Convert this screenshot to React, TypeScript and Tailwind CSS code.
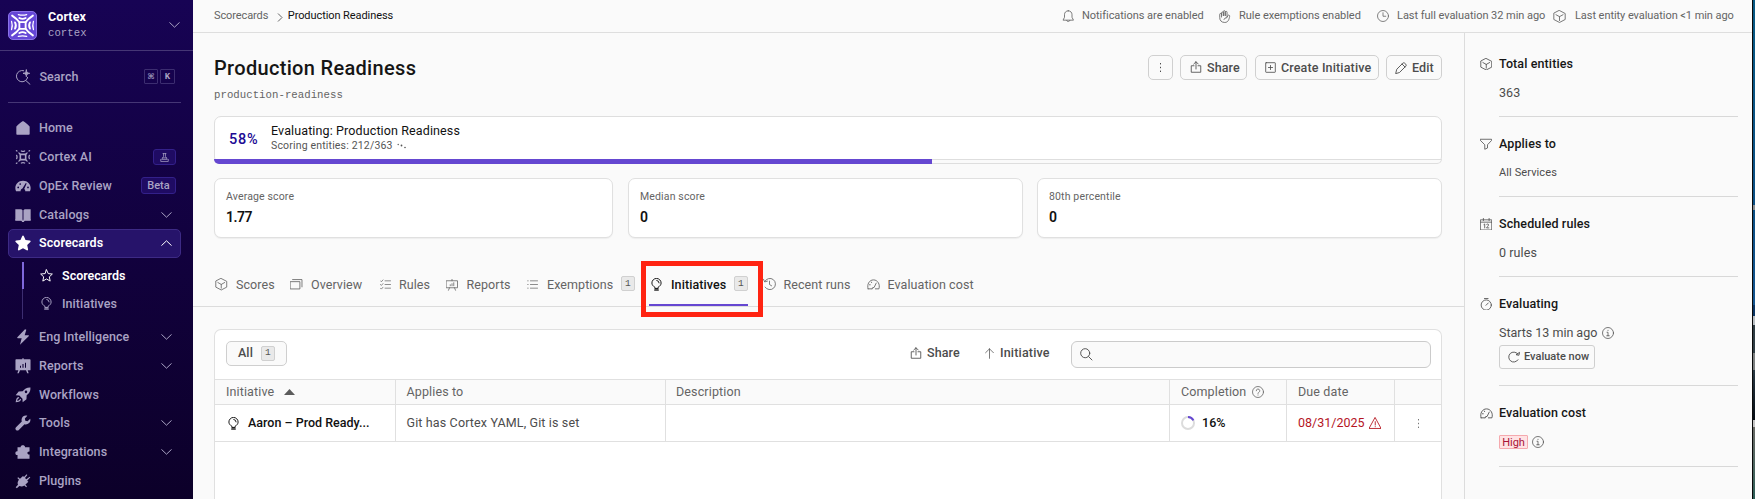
import React from "react";
import type { ReactNode } from "react";

type IconProps = { className?: string };

function Line({ className = "size-[13px]", children, w = 1.6 }: IconProps & { children: ReactNode; w?: number }) {
  return (
    <svg viewBox="0 0 24 24" fill="none" stroke="currentColor" strokeWidth={w} strokeLinecap="round" strokeLinejoin="round" className={`block shrink-0 ${className}`}>
      {children}
    </svg>
  );
}

function Solid({ className = "size-[16px]", children }: IconProps & { children: ReactNode }) {
  return (
    <svg viewBox="0 0 24 24" fill="currentColor" className={`block shrink-0 ${className}`}>
      {children}
    </svg>
  );
}

const Chevron = ({ className = "h-[6px] w-[11px]" }: IconProps) => (
  <svg viewBox="0 0 11 6" fill="none" stroke="currentColor" strokeWidth="1" strokeLinecap="round" strokeLinejoin="round" className={`block shrink-0 ${className}`}>
    <path d="M0.7 0.6L5.5 5.2L10.3 0.6" />
  </svg>
);

const Cube = (p: IconProps) => (
  <Line {...p}>
    <path d="M12 1L22.5 6.5V17.5L12 23L1.5 17.5V6.5Z" />
    <path d="M5.5 8.7L12 12.3L18.5 8.7M12 12.3V19.5" />
  </Line>
);
const Bulb = (p: IconProps) => (
  <Line {...p} w={1.8}>
    <path d="M9 18.5V17C5.5 15 3.5 12.500 3.500 9.300A8.500 8.500 0 0 1 20.500 9.300C20.500 12.500 18.500 15 15 17V18.500Z" />
    <path d="M12.500 4.500A4.800 4.800 0 0 1 16.800 9M8.500 22.500H15.500M9 20.500H15" />
  </Line>
);
const Bell = (p: IconProps) => (
  <Line {...p}>
    <path d="M12 1.500C7.500 1.500 4.800 4.800 4.800 9V14L2 19.500H22L19.200 14V9C19.200 4.800 16.500 1.500 12 1.500Z" />
    <path d="M9 20C9.500 23.300 14.500 23.300 15 20" />
  </Line>
);
const Hand = (p: IconProps) => (
  <Line {...p} w={1.6}>
    <path d="M6.500 13V5.500a1.700 1.700 0 0 1 3.400 0V11V3a1.700 1.700 0 0 1 3.400 0V11V4.200a1.700 1.700 0 0 1 3.400 0V13.500l1.500-3.200a1.800 1.800 0 0 1 3.300 1.300C20.500 18 18.500 23 12.500 23C6 23 3.200 19 3.200 14V8a1.650 1.650 0 0 1 3.300 0" />
    <path d="M11 17.500a5 5 0 0 1 5-3.500" />
  </Line>
);
const Clock = (p: IconProps) => (
  <Line {...p}>
    <circle cx="12" cy="12" r="11" />
    <path d="M12 5.500V12.500H17.500" />
  </Line>
);
const Share = (p: IconProps) => (
  <Line {...p} w={1.7}>
    <path d="M8 9.500H2.500V22.500H21.500V9.500H16M12 16V1.500M7.500 6L12 1.500L16.500 6" />
  </Line>
);
const PlusBox = (p: IconProps) => (
  <Line {...p} w={1.8}>
    <rect x="1.500" y="1.500" width="21" height="21" rx="1" />
    <path d="M12 7.500V16.500M7.500 12H16.500" />
  </Line>
);
const Pencil = (p: IconProps) => (
  <Line {...p} w={1.8}>
    <path d="M1.500 22.500L3.500 14.500L15.500 2.500a3 3 0 0 1 4.200 0L21.500 4.300a3 3 0 0 1 0 4.200L9.500 20.500ZM14 4L20 10" />
  </Line>
);
const Windows = (p: IconProps) => (
  <Line {...p}>
    <path d="M1 7H19V21H1Z" />
    <path d="M5 3H23V17" />
  </Line>
);
const Checklist = (p: IconProps) => (
  <Line {...p}>
    <path d="M11 4H23M11 12H23M11 20H23M1 4L3 6L6.500 2M1 12L3 14L6.500 10M1 20L3 22L6.500 18" />
  </Line>
);
const Bullets = (p: IconProps) => (
  <Line {...p}>
    <path d="M7.500 4H23M7.500 12H23M7.500 20H23M1.500 4H2.500M1.500 12H2.500M1.500 20H2.500" />
  </Line>
);
const Board = (p: IconProps) => (
  <Line {...p}>
    <path d="M12 0.800V3.500M1 3.500H23V17.500H1ZM7 17.500L5 22.500M17 17.500L19 22.500M8.500 13.500V11.500M12 13.500V9.500M15.500 13.500V7.500" />
  </Line>
);
const Gauge = (p: IconProps) => (
  <Line {...p} w={1.6}>
    <path d="M2 20C-0.500 12 4 3.500 12 3.500S24.500 12 22 20H15.500M2 20H8.500" />
    <path d="M9.500 20a2.600 2.600 0 0 1 3.500-2.400L17 9.500M4.500 12.500H6M8 7.500L8.500 8.500" />
  </Line>
);
const History = (p: IconProps) => (
  <Line {...p}>
    <path d="M3.500 6.500A10.800 10.800 0 1 1 4 17.500M1 2.500L3.200 7.500L8.500 6M12.500 6V12.500L16.500 15" />
  </Line>
);
const Magnifier = (p: IconProps) => (
  <Line {...p} w={1.8}>
    <circle cx="10" cy="10" r="8.700" />
    <path d="M16.500 16.500L23 23" />
  </Line>
);
const ArrowUp = (p: IconProps) => (
  <Line {...p}>
    <path d="M12 22.500V1.800M3.500 10.300L12 1.800L20.500 10.300" />
  </Line>
);
const Help = (p: IconProps) => (
  <Line {...p}>
    <circle cx="12" cy="12" r="11" />
    <path d="M8.500 9.500a3.500 3.500 0 1 1 5 3.200c-1 .5-1.500 1-1.500 2.300M12 17.800V18.200" />
  </Line>
);
const Info = (p: IconProps) => (
  <Line {...p} w={1.5}>
    <circle cx="12" cy="12" r="11" />
    <path d="M10 10.500H12V17.500M9.500 17.500H14.500M12 6.500V7" />
  </Line>
);
const Warning = (p: IconProps) => (
  <Line {...p} w={1.7}>
    <path d="M12 1.500L23.200 22H0.800Z" />
    <path d="M12 9V15.500M12 18.500V18.800" />
  </Line>
);
const Funnel = (p: IconProps) => (
  <Line {...p}>
    <path d="M1 2.500H23V5L15 13.500V20L9.500 22.500V13.500L1 5Z" />
  </Line>
);
const Calendar = (p: IconProps) => (
  <Line {...p} w={1.5}>
    <path d="M1.500 3.500H22.500V23H1.500ZM1.500 8H22.500M6.500 0.800V5M17.500 0.800V5M7.500 12.500L9 11.500V19M12.500 12.500C13 11 17 11 16.500 13.500C16 16 13.500 16.500 12.500 19H17" />
  </Line>
);
const Stopwatch = (p: IconProps) => (
  <Line {...p}>
    <circle cx="12" cy="13.500" r="9.800" />
    <path d="M8.500 0.900H15.500M11.500 14L16 9.500" />
  </Line>
);
const Refresh = (p: IconProps) => (
  <Line {...p} w={1.8}>
    <path d="M20 17.500A10 10 0 1 1 19.500 6M23 3.500L21.800 8.500L16.800 7.500Z" />
  </Line>
);
const Dots = ({ className = "h-[11px] w-[3px]" }: IconProps) => (
  <svg viewBox="0 0 3 11" fill="currentColor" className={`block shrink-0 ${className}`}>
    <rect x="1" y="1" width="1" height="1.400" />
    <rect x="1" y="4.800" width="1" height="1.400" />
    <rect x="1" y="8.600" width="1" height="1.400" />
  </svg>
);
const Flask = (p: IconProps) => (
  <Line {...p} w={2}>
    <path d="M8 1.500H16M9.500 1.500V9L4.500 17H19.500L14.500 9V1.500M7 13H17M2 17V22.500H22V17" />
  </Line>
);

const HomeSolid = () => (
  <Solid>
    <path d="M12 1.500C11.500 1.500 2 9 2 10V21a1.200 1.200 0 0 0 1.200 1.200H20.800a1.200 1.200 0 0 0 1.200-1.200V10C22 9 12.500 1.500 12 1.500Z" />
  </Solid>
);
const CortexGlyph = () => (
  <Line className="size-[16px]" w={1.900}>
    <rect x="8" y="8" width="8" height="8" strokeWidth="2.400" />
    <path d="M7.500 7.500L5.800 5.800M16.500 7.500L18.200 5.800M7.500 16.500L5.800 18.200M16.500 16.500L18.200 18.200M9.500 3Q12 4.300 14.500 3M9.500 21Q12 19.700 14.500 21M2.500 9.500Q3.800 12 2.500 14.500M21.500 9.500Q20.200 12 21.500 14.500M2 2.500L3 3M22 2.500L21 3M2 21.500L3 21M22 21.500L21 21" />
  </Line>
);
const GaugeSolid = () => (
  <Solid>
    <path d="M12 4C5 4 0.500 9 0.500 15C0.500 16.800 0.900 18.500 1.600 20H8.500C8 18.300 9 16.300 11.200 15.700L16.200 7.500L17.500 8.300L13.800 16.600C15.200 17.500 15.500 18.900 15.300 20H22.400C23.100 18.500 23.500 16.800 23.500 15C23.500 9 19 4 12 4ZM4.800 15.500a1.300 1.300 0 1 1 0-2.600a1.300 1.300 0 0 1 0 2.600ZM7.800 10.300a1.300 1.300 0 1 1 0-2.600a1.300 1.300 0 0 1 0 2.600ZM19.500 15.500a1.300 1.300 0 1 1 0-2.600a1.300 1.300 0 0 1 0 2.600Z" fillRule="evenodd" />
  </Solid>
);
const BookSolid = () => (
  <Solid>
    <path d="M0.500 3.500H9.500L11.300 5V20.500L9.500 19.800H0.500ZM23.500 3.500H14.500L12.700 5V20.500L14.500 19.800H23.500ZM10 20.500H14L13 22.500H11Z" />
    <path d="M0.500 18.500H10.500L12 21L13.500 18.500H23.500V20.500H14.500L13 22.500H11L9.500 20.500H0.500Z" />
  </Solid>
);
const StarSolid = () => (
  <Solid>
    <path d="M12 0.800C12.600 0.800 13 1.200 13.300 1.800L15.800 7.600L22.200 8.300C23.500 8.500 23.900 9.700 23 10.600L18.300 15L19.600 21.500C19.800 22.800 18.800 23.600 17.600 22.900L12 19.700L6.400 22.900C5.200 23.600 4.200 22.800 4.400 21.500L5.700 15L1 10.600C0.100 9.700 0.500 8.500 1.800 8.300L8.200 7.600L10.700 1.800C11 1.200 11.400 0.800 12 0.800Z" />
  </Solid>
);
const BoltSolid = () => (
  <Solid>
    <path d="M15 0.500L3.500 12.500C3 13.200 3.300 13.800 4.200 13.800H10L7.500 23.500L20.500 10.800C21.200 10 20.800 9.300 20 9.300H14.500L17 1Z" />
  </Solid>
);
const BoardSolid = () => (
  <Solid>
    <path d="M11 0.500H13V2H22.300a1 1 0 0 1 1 1V17.500a1 1 0 0 1-1 1H19L20.500 23H18.300L16.500 18.500H7.500L5.700 23H3.500L5 18.500H1.700a1 1 0 0 1-1-1V3a1 1 0 0 1 1-1H11ZM7.500 11.500V14.500H9V11.500ZM11.200 9V14.500H12.800V9ZM15 7V14.500H16.500V7Z" fillRule="evenodd" />
  </Solid>
);
const RocketSolid = () => (
  <Solid>
    <path d="M23.200 0.800C18 0.500 14.500 2.500 11.500 6.500L5.500 6.800L1 12.500L6.500 12.800L11.200 17.500L11.500 23L17.200 18.500L17.500 12.500C21.500 9.500 23.500 6 23.200 0.800ZM16.500 9.200a1.900 1.900 0 1 1 0-3.800a1.900 1.900 0 0 1 0 3.800Z" fillRule="evenodd" />
    <path d="M5.500 15C2.500 15 1.500 18.500 1 23C5.500 22.500 9 21.500 9 18.500L7.500 17.500C7 19.500 5 20.500 3.200 20.800C3.500 19 4.500 17 6.500 16.500Z" />
  </Solid>
);
const WrenchSolid = () => (
  <Solid>
    <path d="M22.800 5.500L18.800 9.200L15.500 8.500L14.800 5.200L18.500 1.200C14.500 0 10 2.500 9.800 7.200C9.800 8.200 10 9 10.200 9.700L1.500 18.300C0.300 19.500 0.300 21.200 1.500 22.500C2.800 23.700 4.500 23.700 5.700 22.500L14.300 13.800C19.500 15.300 24.500 10.500 22.800 5.500Z" />
  </Solid>
);
const PuzzleSolid = () => (
  <Solid>
    <path d="M8.500 5C7.800 1 15.700 1 15 5H21.800V11.200C17.500 10.700 17.500 16.300 21.800 15.800V22H3.800V16.500C-0.500 17.500 -0.500 10 3.800 11V5Z" />
  </Solid>
);
const PlugSolid = () => (
  <Solid>
    <path d="M2.800 23L1 21.200L4.500 17.800C3 14.500 4.500 11.500 6 10L3.500 7.500L4.800 6.200L7.500 8.500L12 4.500L13.500 6L17.500 2L18.500 3L15 7.500L17 9.500L22 5.500L23 6.500L18.200 11.500L20 13.200L15.500 17.500L18 20L16.800 21.300L14 18.800C11.500 20.500 9 20.500 6.500 19.500Z" />
  </Solid>
);

type NavItemProps = { icon: ReactNode; label: string; trailing?: ReactNode; active?: boolean };

function NavItem({ icon, label, trailing, active }: NavItemProps) {
  return (
    <div
      className={`ml-2 flex h-[28.75px] w-[173px] items-center rounded-[5px] border pl-[6px] pr-[8px] ${
        active ? "border-[#3d2a85] bg-[#26136a] font-semibold text-white" : "border-transparent font-medium text-[#aaa3c4]"
      }`}
    >
      {icon}
      <span className="ml-[8px] flex-1 tracking-[0.08px]">{label}</span>
      {trailing}
    </div>
  );
}

function Sidebar() {
  return (
    <aside className="flex h-full w-[193px] shrink-0 flex-col bg-linear-to-b from-[#170354] to-[#0c0029] text-[12.5px] text-[#aaa3c4]">
      <div className="flex h-[51px] shrink-0 items-center border-b border-[#453675] pl-2 pr-[13px]">
        <div className="flex size-[29px] items-center justify-center rounded-[5px] border border-[#8a72e8] bg-[#6547d6] text-white">
          <Line className="size-[25px]" w={1.800}>
            <path d="M9 8.800H15V15.200H9Z" />
            <path d="M9 8.800C7.500 6.500 5 4.500 2 2.500M15 8.800C16.500 6.500 19 4.500 22 2.500M9 15.200C7.500 17.500 5 19.500 2 21.500M15 15.200C16.500 17.500 19 19.500 22 21.500" />
            <path d="M9 4.800Q12 6.500 15 4.800M9 19.200Q12 17.500 15 19.200M4.800 9Q6.500 12 4.800 15M19.200 9Q17.500 12 19.200 15" />
            <path d="M8 1.500Q12 2.800 16 1.500M8 22.500Q12 21.200 16 22.500M1.500 8Q2.800 12 1.500 16M22.500 8Q21.200 12 22.500 16" strokeWidth="1.200" />
          </Line>
        </div>
        <div className="ml-[11px] flex-1">
          <div className="text-[12.5px] font-bold leading-[17px] text-white">Cortex</div>
          <div className="font-['Liberation_Mono',monospace] text-[10.6px] leading-[17px]">cortex</div>
        </div>
        <Chevron className="h-[6px] w-[11px]" />
      </div>
      <div className="ml-2 flex h-[52px] w-[173px] shrink-0 items-center border-b border-[#453675] pl-[7px] pr-[6px] font-medium">
        <Line className="size-[16px]" w={1.500}>
          <path d="M13 2.500A8.500 8.500 0 1 0 19 12.500M16.500 17.500L22.500 23" />
          <path d="M17 1.500C17.300 5 18.500 6 22 6.500C18.500 7 17.300 8 17 11.500C16.700 8 15.500 7 12 6.500C15.500 6 16.700 5 17 1.500Z" fill="currentColor" />
        </Line>
        <span className="ml-[8.500px] flex-1 tracking-[0.04px]">Search</span>
        <kbd className="flex h-[15px] w-[14px] items-center justify-center rounded-[1px] border border-[#3c2d70] font-['DejaVu_Sans',sans-serif] text-[8px]">⌘</kbd>
        <kbd className="ml-[2px] flex h-[15px] w-[15px] items-center justify-center rounded-[1px] border border-[#3c2d70] font-['Liberation_Mono',monospace] text-[9px] font-bold">K</kbd>
      </div>
      <nav className="mt-[11px] flex flex-col">
        <NavItem icon={<HomeSolid />} label="Home" />
        <NavItem
          icon={<CortexGlyph />}
          label="Cortex AI"
          trailing={
            <span className="-mr-[4px] flex h-[16px] w-[23px] items-center justify-center rounded-[3px] border border-[#33208a] bg-[#1f0b63]">
              <Flask className="size-[9px]" />
            </span>
          }
        />
        <NavItem
          icon={<GaugeSolid />}
          label="OpEx Review"
          trailing={
            <span className="-mr-[4px] flex h-[17px] w-[35px] items-center justify-center rounded-[3px] border border-[#33208a] bg-[#1f0b63] text-[11px] leading-none">
              Beta
            </span>
          }
        />
        <NavItem icon={<BookSolid />} label="Catalogs" trailing={<Chevron />} />
        <NavItem icon={<StarSolid />} label="Scorecards" active trailing={<Chevron className="h-[6px] w-[11px] rotate-180" />} />
        <div className="mb-[4px] mt-[4px] flex h-[57px]">
          <div className="ml-[22px] w-px bg-[#3c2d70]">
            <div className="h-[27px] w-[2px] bg-[#7f68dc]" />
          </div>
          <div className="ml-[17px]">
            <div className="flex h-[28px] items-center font-semibold text-white">
              <Line className="size-[13px]" w={1.800}>
                <path d="M12 1.500L15.200 8.500L22.800 9.300L17.200 14.500L18.800 22.300L12 18.400L5.200 22.300L6.800 14.500L1.200 9.300L8.800 8.500Z" />
              </Line>
              <span className="ml-[9px] tracking-[0px]">Scorecards</span>
            </div>
            <div className="flex h-[28px] items-center font-medium">
              <Bulb className="size-[13px]" />
              <span className="ml-[9px] tracking-[0.06px]">Initiatives</span>
            </div>
          </div>
        </div>
        <NavItem icon={<BoltSolid />} label="Eng Intelligence" trailing={<Chevron />} />
        <NavItem icon={<BoardSolid />} label="Reports" trailing={<Chevron />} />
        <NavItem icon={<RocketSolid />} label="Workflows" />
        <NavItem icon={<WrenchSolid />} label="Tools" trailing={<Chevron />} />
        <NavItem icon={<PuzzleSolid />} label="Integrations" trailing={<Chevron />} />
        <NavItem icon={<PlugSolid />} label="Plugins" />
      </nav>
    </aside>
  );
}

function TopBar() {
  return (
    <header className="flex h-[33px] shrink-0 items-center border-b border-[#dedede] pl-[21px] text-[11px] tracking-[-0.04px] text-[#646464]">
      <span className="tracking-[-0.1px]">Scorecards</span>
      <svg viewBox="0 0 6 9" fill="none" stroke="currentColor" strokeWidth="1" className="ml-[9px] mt-[2px] h-[9px] w-[6px]">
        <path d="M1 0.500L5 4.500L1 8.500" />
      </svg>
      <span className="ml-[4.500px] flex-1 tracking-[-0.080px] text-[#111]">Production Readiness</span>
      <Bell className="mr-[8px] size-[12.500px]" />
      <span className="w-[136px]">Notifications are enabled</span>
      <Hand className="mr-[8px] size-[13px]" />
      <span className="w-[138px]">Rule exemptions enabled</span>
      <Clock className="mr-[8px] size-[12px]" />
      <span className="w-[156px]">Last full evaluation 32 min ago</span>
      <Cube className="mr-[9px] size-[13px]" />
      <span className="w-[177px] tracking-[-0.060px]">Last entity evaluation &lt;1 min ago</span>
    </header>
  );
}

const buttonBase = "flex h-[25px] items-center rounded-[5px] border border-[#d0d0d0] bg-[#fafafa] font-[480] text-[#4c4c4c]";

function Count({ className = "" }: IconProps) {
  return (
    <span className={`flex h-[15px] w-[14px] items-center justify-center rounded-[2px] border border-[#d0d0d0] bg-[#e9e9e9] font-['Liberation_Mono',monospace] text-[9.5px] leading-none text-[#555] ${className}`}>
      1
    </span>
  );
}

function Stat({ label, value, className }: { label: string; value: string; className: string }) {
  return (
    <div className={`h-[60px] rounded-[7px] border border-[#e0e0e0] bg-white pl-[11px] pt-[9px] shadow-[0_1px_1px_rgba(0,0,0,0.05)] ${className}`}>
      <div className="text-[10.5px] leading-[17px] tracking-[0.15px] text-[#646464]">{label}</div>
      <div className="mt-[3px] text-[14px] font-semibold leading-[19px] tracking-[-0.5px] text-[#111]">{value}</div>
    </div>
  );
}

function Tab({ icon, label, className, active, count }: { icon: ReactNode; label: string; className: string; active?: boolean; count?: boolean }) {
  return (
    <div className={`flex h-[41px] shrink-0 items-center ${active ? "font-[480] text-[#111]" : "text-[#646464]"} ${className}`}>
      {icon}
      <span className="flex-1">{label}</span>
      {count && <Count className="-mt-[2px]" />}
    </div>
  );
}

function PanelSection({ icon, title, children, className }: { icon: ReactNode; title: string; children: ReactNode; className: string }) {
  return (
    <section className={`flex ${className}`}>
      <div className="flex h-[18px] w-[19.500px] shrink-0 items-center">{icon}</div>
      <div className="w-[239px] border-b border-[#d8d8d8]">
        <h2 className="text-[12.5px] font-[480] leading-[18px] tracking-[0.110px] text-[#161616]">{title}</h2>
        {children}
      </div>
    </section>
  );
}

export default function App() {
  return (
    <div className="flex h-[499px] w-[1755px] overflow-hidden bg-[#fafafa] font-[Roboto,'Liberation_Sans',sans-serif] text-[12.5px] leading-[18px] tracking-[0.08px] text-[#4c4c4c]">
      <Sidebar />
      <div className="flex min-w-0 flex-1 flex-col">
        <TopBar />
        <div className="flex min-h-0 flex-1">
          <main className="flex w-[1271px] shrink-0 flex-col">
            <div className="mt-[22px] flex h-[25px] items-center pl-[21px] pr-[22px]">
              <h1 className="flex-1 text-[20px] font-medium tracking-[0.32px] text-[#151515]">Production Readiness</h1>
              <button className={`${buttonBase} w-[25px] justify-center`}>
                <Dots />
              </button>
              <button className={`${buttonBase} ml-[7px] w-[67px] pl-[9px]`}>
                <Share className="-mt-[1px] mr-[5px] size-[12px]" />
                Share
              </button>
              <button className={`${buttonBase} ml-[8px] w-[124px] pl-[9px]`}>
                <PlusBox className="mr-[5px] size-[11px]" />
                <span className="tracking-[0.150px]">Create Initiative</span>
              </button>
              <button className={`${buttonBase} ml-[7px] w-[56px] pl-[8px]`}>
                <Pencil className="mr-[5px] size-[12px]" />
                Edit
              </button>
            </div>
            <div className="ml-[21px] mt-[6px] font-['Liberation_Mono',monospace] text-[10.700px] leading-[18px] tracking-[0.03px] text-[#646464]">production-readiness</div>

            <div className="ml-[21px] mt-[12px] flex h-[48px] w-[1228px] shrink-0 flex-col rounded-[7px] border border-[#dedede] bg-white">
              <div className="flex h-[42px] shrink-0 items-center pl-[14px]">
                <span className="mt-[4px] w-[42px] text-[14.500px] font-medium tracking-[0.700px] text-[#200a94]">58%</span>
                <div>
                  <div className="text-[12.500px] leading-[15px] tracking-[0.120px] text-[#111]">Evaluating: Production Readiness</div>
                  <div className="flex items-center text-[10.500px] leading-[15px] tracking-[0.170px] text-[#555]">
                    Scoring entities: 212/363
                    <svg viewBox="0 0 10 6" fill="currentColor" className="ml-[4px] h-[6px] w-[10px]">
                      <circle cx="1.200" cy="1.500" r="0.700" />
                      <circle cx="4.500" cy="2.500" r="0.900" />
                      <circle cx="8" cy="4.500" r="0.800" />
                    </svg>
                  </div>
                </div>
              </div>
              <div className="-mx-px h-[5px] shrink-0 rounded-b-[6px] border border-[#dedede] bg-[#fafafa]">
                <div className="-ml-px -mt-px h-[5px] w-[718px] rounded-bl-[5px] bg-[#6547d1]" />
              </div>
            </div>

            <div className="ml-[21px] mt-[14px] flex shrink-0">
              <Stat label="Average score" value="1.77" className="w-[399px]" />
              <Stat label="Median score" value="0" className="ml-[15px] w-[395px]" />
              <Stat label="80th percentile" value="0" className="ml-[14px] w-[405px]" />
            </div>

            <div className="relative mt-[26px] flex h-[43px] shrink-0 items-start border-b border-[#dcdcdc] pl-[22px]">
              <Tab className="w-[75px]" icon={<Cube className="mr-[8.500px] size-[12.500px]" />} label="Scores" />
              <Tab className="w-[89.500px]" icon={<Windows className="mr-[8.500px] size-[12.500px]" />} label="Overview" />
              <Tab className="w-[66.500px]" icon={<Checklist className="mr-[8.500px] size-[11px]" />} label="Rules" />
              <Tab className="w-[81px]" icon={<Board className="mr-[8.500px] size-[12px]" />} label="Reports" />
              <Tab className="w-[108px]" icon={<Bullets className="mr-[9px] size-[11px]" />} label="Exemptions" count />
              <div className="ml-[14px] flex h-[42px] w-[99px] items-start border-b-2 border-[#6547d1]">
                <Tab className="w-[99px]" icon={<Bulb className="ml-[1px] mr-[8px] size-[13px]" />} label="Initiatives" active count />
              </div>
              <Tab className="ml-[15px] w-[104px]" icon={<History className="mr-[8px] size-[12.500px]" />} label="Recent runs" />
              <Tab className="w-[120px]" icon={<Gauge className="mr-[7.500px] size-[13px]" />} label="Evaluation cost" />
              <div className="pointer-events-none absolute left-[448px] top-[-3px] h-[56px] w-[122px] border-[5px] border-[#ff2412]" />
            </div>

            <div className="ml-[21px] mt-[22px] flex w-[1228px] flex-1 flex-col rounded-t-[7px] border border-b-0 border-[#e0e0e0] bg-white">
              <div className="flex h-[49px] shrink-0 items-start pl-[11px] pr-[10px] pt-[11px]">
                <div className="flex h-[25px] w-[61px] items-center rounded-[5px] border border-[#cfcfcf] bg-[#fafafa] pb-[1px] pl-[11px] font-[480] text-[#4c4c4c]">
                  <span className="flex-1">All</span>
                  <Count className="mr-[11px]" />
                </div>
                <div className="ml-auto flex h-[24px] items-center font-[480]">
                  <Share className="mr-[5px] size-[12px]" />
                  <span className="w-[57px]">Share</span>
                  <ArrowUp className="mr-[5px] size-[11px]" />
                  <span className="w-[71px] tracking-[0.180px]">Initiative</span>
                </div>
                <div className="flex h-[27px] w-[360px] items-center rounded-[6px] border border-[#cbcbcb] bg-[#fafafa] pl-[8px]">
                  <Magnifier className="size-[12.500px]" />
                </div>
              </div>
              <div className="flex h-[26px] shrink-0 items-stretch border-y border-[#e0e0e0] bg-[#fafafa] tracking-[0.130px] text-[#646464]">
                <div className="flex w-[181px] items-center border-r border-[#e0e0e0] pl-[11px]">
                  Initiative
                  <svg viewBox="0 0 11 6" className="ml-[9.500px] h-[6px] w-[11px] fill-[#5c5c5c]">
                    <path d="M5.500 0L11 6H0Z" />
                  </svg>
                </div>
                <div className="flex w-[270px] items-center border-r border-[#e0e0e0] pl-[10.500px]">Applies to</div>
                <div className="flex w-[504px] items-center border-r border-[#e0e0e0] pl-[10px]">Description</div>
                <div className="flex w-[117px] items-center border-r border-[#e0e0e0] pl-[11px]">
                  Completion
                  <Help className="ml-[6px] size-[12px]" />
                </div>
                <div className="flex w-[108px] items-center border-r border-[#e0e0e0] pl-[11px]">Due date</div>
              </div>
              <div className="flex h-[37px] shrink-0 items-stretch border-b border-[#e0e0e0]">
                <div className="flex w-[181px] items-center border-r border-[#e0e0e0] pl-[12px] font-[480] tracking-[0.010px] text-[#111]">
                  <Bulb className="mr-[8px] size-[13px]" />
                  Aaron – Prod Ready...
                </div>
                <div className="flex w-[270px] items-center border-r border-[#e0e0e0] pl-[10.500px] tracking-[0.140px]">Git has Cortex YAML, Git is set</div>
                <div className="w-[504px] border-r border-[#e0e0e0]" />
                <div className="flex w-[117px] items-center border-r border-[#e0e0e0] pl-[11px] font-[480] text-[#111]">
                  <svg viewBox="0 0 14 14" fill="none" strokeWidth="2" className="mr-[7px] size-[14px]">
                    <circle cx="7" cy="7" r="6" stroke="#dcdcdc" />
                    <path d="M7 1A6 6 0 0 1 12.400 4.400" stroke="#6547d1" />
                  </svg>
                  16%
                </div>
                <div className="flex w-[108px] items-center border-r border-[#e0e0e0] pl-[11px] tracking-[0px] text-[#b5151f]">
                  08/31/2025
                  <Warning className="ml-[4px] size-[12.500px]" />
                </div>
                <div className="flex flex-1 items-center justify-center text-[#777]">
                  <Dots />
                </div>
              </div>
            </div>
          </main>

          <aside className="w-[288px] shrink-0 border-l border-[#dcdcdc] pl-[14.500px]">
            <PanelSection className="mt-[22px] h-[62px]" icon={<Cube className="size-[12.500px]" />} title="Total entities">
              <div className="mt-[11px]">363</div>
            </PanelSection>
            <PanelSection className="mt-[18px] h-[62px]" icon={<Funnel className="size-[12px]" />} title="Applies to">
              <div className="mt-[11px] text-[11px] tracking-[0.100px]">All Services</div>
            </PanelSection>
            <PanelSection className="mt-[18px] h-[62px]" icon={<Calendar className="size-[12.500px]" />} title="Scheduled rules">
              <div className="mt-[11px]">0 rules</div>
            </PanelSection>
            <PanelSection className="mt-[18px] h-[91px]" icon={<Stopwatch className="size-[12.500px]" />} title="Evaluating">
              <div className="mt-[11px] flex items-center tracking-[-0.020px]">
                Starts 13 min ago
                <Info className="ml-[5px] size-[12px]" />
              </div>
              <button className="mt-[3px] flex h-[24px] w-[96px] items-center rounded-[3px] border border-[#cfcfcf] pl-[8px] text-[11px] font-[480] tracking-[0px]">
                <Refresh className="mr-[4px] size-[12px]" />
                Evaluate now
              </button>
            </PanelSection>
            <PanelSection className="mt-[18px] h-[63px]" icon={<Gauge className="size-[13px]" />} title="Evaluation cost">
              <div className="mt-[13px] flex items-center">
                <span className="flex h-[14px] w-[29px] items-center justify-center rounded-[1px] border border-[#f5a9ae] bg-[#ffe3e4] text-[11px] leading-none tracking-[-0.100px] text-[#a81337]">High</span>
                <Info className="ml-[4px] size-[12px]" />
              </div>
            </PanelSection>
          </aside>
        </div>
      </div>
      <div className="flex w-[3px] shrink-0">
        <div className="w-px bg-[#0a0a0a]" />
        <div className="flex w-[2px] flex-col">
          <div className="h-[205px] bg-linear-to-b from-[#085a84] to-[#0b4f84]" />
          <div className="h-[5px] bg-[#8a8f92]" />
          <div className="h-[95px] bg-linear-to-b from-[#0b4f84] to-[#145590]" />
          <div className="h-[11px] bg-[#0b3564]" />
          <div className="h-[9px] bg-[#b9bec2]" />
          <div className="h-[28px] bg-[#2f3d44]" />
          <div className="h-[17px] bg-[#7d8080]" />
          <div className="h-[50px] bg-linear-to-b from-[#2a3a44] to-[#060d14]" />
          <div className="h-[7px] bg-[#c4c4c4]" />
          <div className="flex-1 bg-linear-to-b from-[#6a6a66] to-[#2c5f57]" />
        </div>
      </div>
    </div>
  );
}
